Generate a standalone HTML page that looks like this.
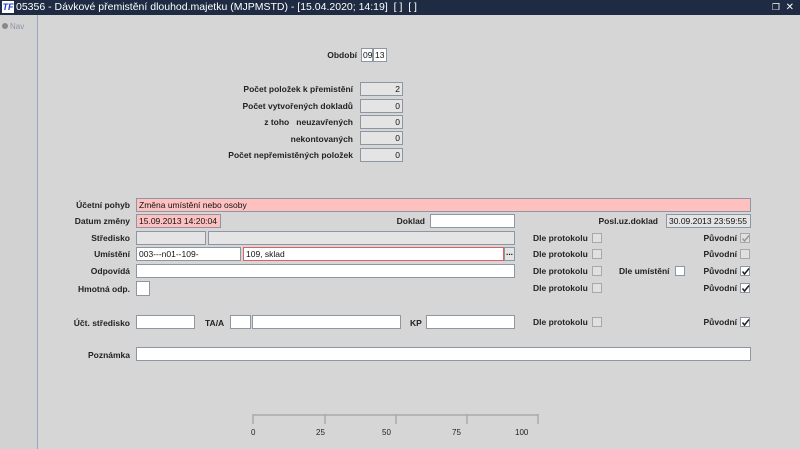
<!DOCTYPE html>
<html><head><meta charset="utf-8"><style>
*{box-sizing:border-box;margin:0;padding:0}
body{width:800px;height:449px;overflow:hidden;background:#d6d6d6;font-family:"Liberation Sans",sans-serif;position:relative}
#tb{position:absolute;left:0;top:0;width:800px;height:15px;background:#1e2b42;color:#fff;font-size:10.5px;line-height:15px;white-space:nowrap}
#side{position:absolute;left:0;top:15px;width:38px;height:434px;background:#d2d2d2;border-right:1px solid #9aa8bf}
.l{position:absolute;font-size:8.5px;font-weight:bold;color:#222;white-space:nowrap;line-height:10px}
.r{text-align:right}
.i{position:absolute;height:14px;background:#fff;border:1px solid #8d96a3;font-size:8.5px;line-height:12px;padding-left:2px;color:#111;white-space:nowrap;overflow:hidden}
.g{background:#e4e4e4}
.p{background:#ffc0c0}
.cb{position:absolute;width:10px;height:10px;border:1px solid #8d96a3;background:#fff}
.cb.d{background:#e0e0e0;border-color:#a8a8a8}
.cb svg{position:absolute;left:0;top:0}
.t{position:absolute;font-size:8px;color:#222}
</style></head><body>
<div id="tb"><span style="display:inline-block;width:12px;height:12px;margin:1px 2px 0 2px;vertical-align:top;background:#fff;color:#1a3fd0;font-size:9px;font-weight:bold;font-style:italic;line-height:12px;text-align:center">TF</span>05356 - Dávkové přemistění dlouhod.majetku (MJPMSTD) - [15.04.2020; 14:19]&nbsp; [ ]&nbsp; [ ]
<span style="position:absolute;right:20px;top:0;font-size:9px">❐</span><span style="position:absolute;right:6px;top:0;font-size:10px">✕</span></div>
<div id="side"><div style="position:absolute;left:2px;top:7px;font-size:8px;color:#8a96aa"><span style="display:inline-block;width:6px;height:6px;border-radius:50%;background:#888;margin-right:2px"></span>Nav</div></div>

<div class="l r" style="right:443px;top:50px">Období</div>
<div class="i" style="left:361px;top:48px;width:12px;padding-left:1px">09</div>
<div class="i" style="left:373px;top:48px;width:14px;padding-left:1px">13</div>

<div class="l r" style="right:447px;top:84px">Počet položek k přemistění</div>
<div class="l r" style="right:447px;top:101px">Počet vytvořených dokladů</div>
<div class="l r" style="right:447px;top:117px">z toho &nbsp;&nbsp;neuzavřených</div>
<div class="l r" style="right:447px;top:134px">nekontovaných</div>
<div class="l r" style="right:447px;top:150px">Počet nepřemistěných položek</div>
<div class="i g" style="left:360px;top:82px;width:43px;text-align:right;padding-right:2px">2</div>
<div class="i g" style="left:360px;top:99px;width:43px;text-align:right;padding-right:2px">0</div>
<div class="i g" style="left:360px;top:115px;width:43px;text-align:right;padding-right:2px">0</div>
<div class="i g" style="left:360px;top:131px;width:43px;text-align:right;padding-right:2px">0</div>
<div class="i g" style="left:360px;top:148px;width:43px;text-align:right;padding-right:2px">0</div>

<div class="l r" style="right:670px;top:200px">Účetní pohyb</div>
<div class="i p" style="left:136px;top:198px;width:615px">Změna umístění nebo osoby</div>

<div class="l r" style="right:670px;top:216px">Datum změny</div>
<div class="i p" style="left:136px;top:214px;width:85px">15.09.2013 14:20:04</div>
<div class="l r" style="right:375px;top:216px">Doklad</div>
<div class="i" style="left:430px;top:214px;width:85px"></div>
<div class="l r" style="right:142px;top:216px">Posl.uz.doklad</div>
<div class="i g" style="left:666px;top:214px;width:85px">30.09.2013 23:59:55</div>

<div class="l r" style="right:670px;top:233px">Středisko</div>
<div class="i g" style="left:136px;top:231px;width:70px"></div>
<div class="i g" style="left:208px;top:231px;width:307px"></div>

<div class="l r" style="right:670px;top:249px">Umístění</div>
<div class="i" style="left:136px;top:247px;width:105px">003---n01--109-</div>
<div class="i" style="left:243px;top:247px;width:261px;border-color:#e06060">109, sklad</div>
<div class="i g" style="left:504px;top:247px;width:11px;padding:0;text-align:center;font-weight:bold;line-height:9px">...</div>

<div class="l r" style="right:670px;top:266px">Odpovídá</div>
<div class="i" style="left:136px;top:264px;width:379px"></div>
<div class="l" style="left:619px;top:266px">Dle umístění</div>
<div class="cb" style="left:675px;top:266px"></div>

<div class="l r" style="right:670px;top:284px">Hmotná odp.</div>
<div class="i" style="left:136px;top:281px;width:14px;height:15px"></div>

<div class="l" style="left:533px;top:233px">Dle protokolu</div><div class="cb d" style="left:592px;top:233px"></div>
<div class="l" style="left:533px;top:249px">Dle protokolu</div><div class="cb d" style="left:592px;top:249px"></div>
<div class="l" style="left:533px;top:266px">Dle protokolu</div><div class="cb d" style="left:592px;top:266px"></div>
<div class="l" style="left:533px;top:283px">Dle protokolu</div><div class="cb d" style="left:592px;top:283px"></div>
<div class="l" style="left:533px;top:317px">Dle protokolu</div><div class="cb d" style="left:592px;top:317px"></div>

<div class="l r" style="right:63px;top:233px">Původní</div><div class="cb d" style="left:740px;top:233px"><svg width="9" height="9"><path d="M1.5 4.5 L3.5 7 L8 1.5" stroke="#999" stroke-width="1.5" fill="none"/></svg></div>
<div class="l r" style="right:63px;top:249px">Původní</div><div class="cb d" style="left:740px;top:249px"></div>
<div class="l r" style="right:63px;top:266px">Původní</div><div class="cb" style="left:740px;top:266px"><svg width="9" height="9"><path d="M1.5 4.5 L3.5 7 L8 1.5" stroke="#222" stroke-width="1.5" fill="none"/></svg></div>
<div class="l r" style="right:63px;top:283px">Původní</div><div class="cb" style="left:740px;top:283px"><svg width="9" height="9"><path d="M1.5 4.5 L3.5 7 L8 1.5" stroke="#222" stroke-width="1.5" fill="none"/></svg></div>
<div class="l r" style="right:63px;top:317px">Původní</div><div class="cb" style="left:740px;top:317px"><svg width="9" height="9"><path d="M1.5 4.5 L3.5 7 L8 1.5" stroke="#222" stroke-width="1.5" fill="none"/></svg></div>

<div class="l r" style="right:670px;top:318px">Účt. středisko</div>
<div class="i" style="left:136px;top:315px;width:59px"></div>
<div class="l" style="left:205px;top:318px">TA/A</div>
<div class="i" style="left:230px;top:315px;width:21px"></div>
<div class="i" style="left:252px;top:315px;width:149px"></div>
<div class="l" style="left:410px;top:318px">KP</div>
<div class="i" style="left:426px;top:315px;width:89px"></div>

<div class="l r" style="right:670px;top:350px">Poznámka</div>
<div class="i" style="left:136px;top:347px;width:615px"></div>

<svg style="position:absolute;left:250px;top:410px" width="295" height="15"><path d="M3 5 H288 M3 4 V14 M75 4 V14 M146 4 V14 M217 4 V14 M288 4 V14" stroke="#aaa" stroke-width="1.5" fill="none"/></svg>
<div class="t" style="left:251px;top:428px">0</div>
<div class="t" style="left:316px;top:428px">25</div>
<div class="t" style="left:382px;top:428px">50</div>
<div class="t" style="left:452px;top:428px">75</div>
<div class="t" style="left:515px;top:428px">100</div>
</body></html>
